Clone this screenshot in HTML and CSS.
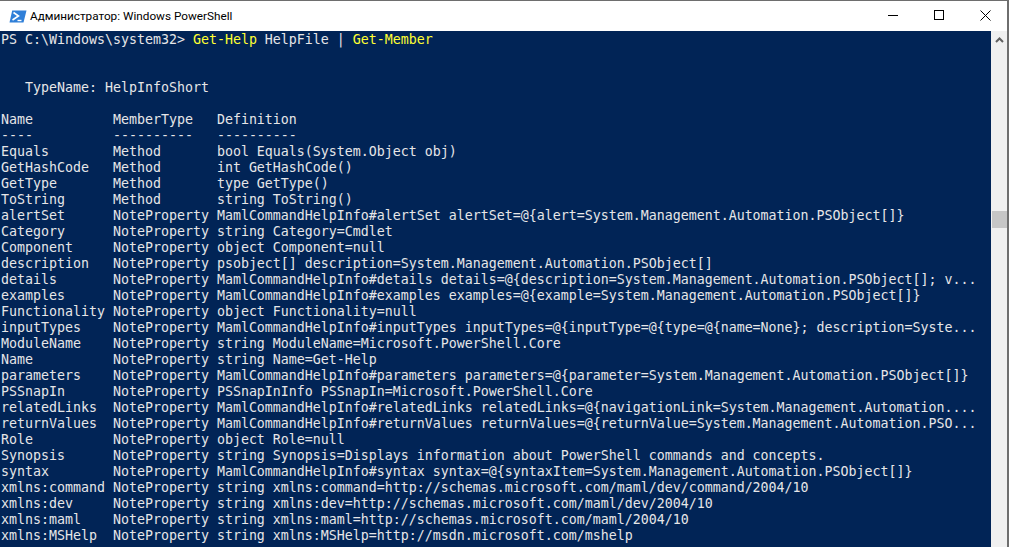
FILE: index.html
```html
<!DOCTYPE html>
<html lang="ru">
<head>
<meta charset="utf-8">
<title>Администратор: Windows PowerShell</title>
<link rel="stylesheet" href="styles.css">
</head>
<body>
<div class="window">
<header class="titlebar">
<svg class="appicon" width="18" height="13" viewBox="0 0 18 13"><path d="M3.2 0.5H17.5L14.5 12.5H0.5Z" fill="#2f7fd8"/><path d="M4.5 2.5L9.5 6L3.5 10" fill="none" stroke="#fff" stroke-width="1.6"/><path d="M8.5 10.5H12.5" stroke="#fff" stroke-width="1.4"/></svg>
<span class="title">Администратор: Windows PowerShell</span>
<div class="controls">
<span class="ctl"><svg width="11" height="11" viewBox="0 0 11 11"><path d="M0 5.5H10" stroke="#000" fill="none"/></svg></span>
<span class="ctl"><svg width="11" height="11" viewBox="0 0 11 11"><rect x="0.5" y="0.5" width="9" height="9" stroke="#000" fill="none"/></svg></span>
<span class="ctl"><svg width="11" height="11" viewBox="0 0 11 11"><path d="M0.5 0.5L10.5 10.5M10.5 0.5L0.5 10.5" stroke="#000" fill="none"/></svg></span>
</div>
</header>
<div class="body">
<pre class="console">PS C:\Windows\system32&gt; <span class="cmd">Get-Help</span> HelpFile | <span class="cmd">Get-Member</span>


   TypeName: HelpInfoShort

Name          MemberType   Definition
----          ----------   ----------
Equals        Method       bool Equals(System.Object obj)
GetHashCode   Method       int GetHashCode()
GetType       Method       type GetType()
ToString      Method       string ToString()
alertSet      NoteProperty MamlCommandHelpInfo#alertSet alertSet=@{alert=System.Management.Automation.PSObject[]}
Category      NoteProperty string Category=Cmdlet
Component     NoteProperty object Component=null
description   NoteProperty psobject[] description=System.Management.Automation.PSObject[]
details       NoteProperty MamlCommandHelpInfo#details details=@{description=System.Management.Automation.PSObject[]; v...
examples      NoteProperty MamlCommandHelpInfo#examples examples=@{example=System.Management.Automation.PSObject[]}
Functionality NoteProperty object Functionality=null
inputTypes    NoteProperty MamlCommandHelpInfo#inputTypes inputTypes=@{inputType=@{type=@{name=None}; description=Syste...
ModuleName    NoteProperty string ModuleName=Microsoft.PowerShell.Core
Name          NoteProperty string Name=Get-Help
parameters    NoteProperty MamlCommandHelpInfo#parameters parameters=@{parameter=System.Management.Automation.PSObject[]}
PSSnapIn      NoteProperty PSSnapInInfo PSSnapIn=Microsoft.PowerShell.Core
relatedLinks  NoteProperty MamlCommandHelpInfo#relatedLinks relatedLinks=@{navigationLink=System.Management.Automation....
returnValues  NoteProperty MamlCommandHelpInfo#returnValues returnValues=@{returnValue=System.Management.Automation.PSO...
Role          NoteProperty object Role=null
Synopsis      NoteProperty string Synopsis=Displays information about PowerShell commands and concepts.
syntax        NoteProperty MamlCommandHelpInfo#syntax syntax=@{syntaxItem=System.Management.Automation.PSObject[]}
xmlns:command NoteProperty string xmlns:command=http://schemas.microsoft.com/maml/dev/command/2004/10
xmlns:dev     NoteProperty string xmlns:dev=http://schemas.microsoft.com/maml/dev/2004/10
xmlns:maml    NoteProperty string xmlns:maml=http://schemas.microsoft.com/maml/2004/10
xmlns:MSHelp  NoteProperty string xmlns:MSHelp=http://msdn.microsoft.com/mshelp
</pre>
<aside class="scrollbar">
<svg class="arrow" width="9" height="6" viewBox="0 0 9 6"><path d="M1 5L4.5 1.5L8 5" fill="none" stroke="#606060" stroke-width="2"/></svg>
<div class="thumb"></div>
</aside>
</div>
</div>
</body>
</html>
```
FILE: styles.css
```css
html, body {
  margin: 0;
  padding: 0;
  width: 1009px;
  height: 547px;
  overflow: hidden;
  background: #fff;
}
.window {
  width: 1009px;
  height: 547px;
  box-sizing: border-box;
  border-top: 1px solid #6e6e6e;
  border-right: 2px solid #6e6e6e;
  display: flex;
  flex-direction: column;
}
.titlebar {
  height: 30px;
  flex: none;
  display: flex;
  align-items: center;
  padding-left: 9px;
  background: #fff;
}
.appicon {
  flex: none;
  margin-right: 3px;
}
.title {
  font: 11.75px Roboto, "Noto Sans", sans-serif;
  color: #000;
  white-space: nowrap;
}
.controls {
  margin-left: auto;
  margin-right: -1px;
  display: flex;
}
.ctl {
  width: 46px;
  height: 30px;
  box-sizing: border-box;
  padding-top: 9px;
  display: flex;
  align-items: flex-start;
  justify-content: center;
}
.body {
  flex: 1;
  min-height: 0;
  display: flex;
}
.console {
  flex: 1;
  margin: 0;
  padding: 1px 0 0 1px;
  background: #012456;
  color: #e6e6e8;
  font-family: "DejaVu Sans Mono", "Liberation Mono", monospace;
  font-size: 13.29px;
  line-height: 16px;
  overflow: hidden;
  white-space: pre;
}
.cmd {
  color: #ffff33;
}
.scrollbar {
  width: 16px;
  flex: none;
  background: #f0f0f0;
  display: flex;
  flex-direction: column;
  align-items: center;
}
.arrow {
  margin-top: 6px;
}
.thumb {
  width: 15px;
  height: 17px;
  margin-top: 168px;
  background: #c6c6c6;
}
```
